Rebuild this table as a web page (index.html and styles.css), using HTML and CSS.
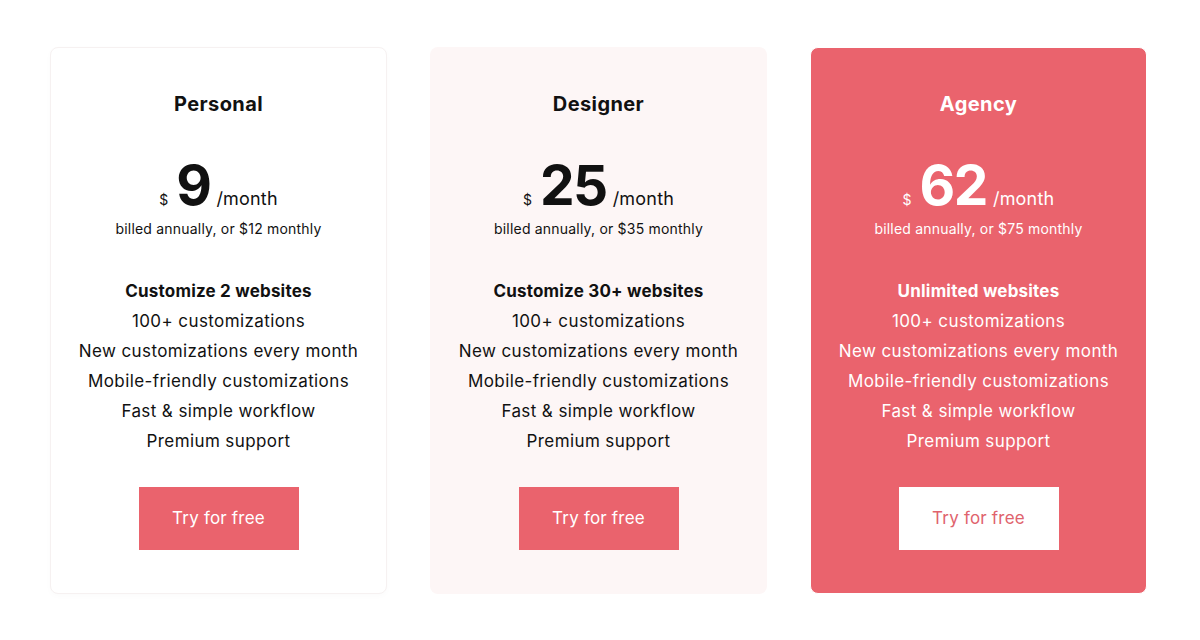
FILE: index.html
```html
<!DOCTYPE html>
<html>
    <head>
        <meta charset="utf-8">
        <link rel="stylesheet" href="styles.css">
    </head>
    <body>
        <div id="pricing">

            <div class="card plain">
                <h2 class="plan">Personal</h2>
                <div class="price">
                    <span class="cur">$</span>
                    <span class="amount">9</span>
                    <span class="per">/month</span>
                </div>
                <p class="billed">billed annually, or $12 monthly</p>
                <ul class="features">
                    <li class="main">Customize 2 websites</li>
                    <li>100+ customizations</li>
                    <li>New customizations every month</li>
                    <li>Mobile-friendly customizations</li>
                    <li>Fast &amp; simple workflow</li>
                    <li>Premium support</li>
                </ul>
                <a class="btn" href="#">Try for free</a>
            </div>

            <div class="card tinted">
                <h2 class="plan">Designer</h2>
                <div class="price">
                    <span class="cur">$</span>
                    <span class="amount">25</span>
                    <span class="per">/month</span>
                </div>
                <p class="billed">billed annually, or $35 monthly</p>
                <ul class="features">
                    <li class="main">Customize 30+ websites</li>
                    <li>100+ customizations</li>
                    <li>New customizations every month</li>
                    <li>Mobile-friendly customizations</li>
                    <li>Fast &amp; simple workflow</li>
                    <li>Premium support</li>
                </ul>
                <a class="btn" href="#">Try for free</a>
            </div>

            <div class="card featured">
                <h2 class="plan">Agency</h2>
                <div class="price">
                    <span class="cur">$</span>
                    <span class="amount">62</span>
                    <span class="per">/month</span>
                </div>
                <p class="billed">billed annually, or $75 monthly</p>
                <ul class="features">
                    <li class="main">Unlimited websites</li>
                    <li>100+ customizations</li>
                    <li>New customizations every month</li>
                    <li>Mobile-friendly customizations</li>
                    <li>Fast &amp; simple workflow</li>
                    <li>Premium support</li>
                </ul>
                <a class="btn" href="#">Try for free</a>
            </div>

        </div>
    </body>
</html>
```

FILE: styles.css
```css
*{ padding: 0px; margin: 0px; box-sizing: border-box; }

html, body
{
    background: white;
    width: 100%;
    height: 100%;
}

body
{
    font-family: "Inter", "Noto Sans", sans-serif;
    color: #111;
}

#pricing
{
    display: flex;
    gap: 43px;
    padding: 47px 50px 0 50px;
}

.card
{
    width: 337px;
    height: 547px;
    border-radius: 8px;
    border: 1px solid transparent;
    text-align: center;
    padding-top: 42px;
}

.card.plain
{
    background: white;
    border-color: #f6f1f1;
    box-shadow: 0 2px 6px rgba(0,0,0,0.02);
}
.card.tinted
{
    background: #fdf6f6;
}
.card.featured
{
    background: #ea636d;
    border-color: white;
    color: white;
}

.plan
{
    font-size: 20px;
    line-height: 28px;
    font-weight: 700;
    letter-spacing: 0.4px;
}

.price
{
    display: flex;
    justify-content: center;
    align-items: baseline;
    gap: 6px;
    margin-top: 40px;
    line-height: 1;
}
.price .cur  { font-size: 14px; margin-right: 2px; }
.price .amount
{
    font-size: 55px;
    font-weight: 700;
    letter-spacing: -1.5px;
}
.price .per
{
    font-size: 18px;
    letter-spacing: 0.2px;
}

.billed
{
    font-size: 14px;
    line-height: 20px;
    margin-top: 6px;
    letter-spacing: 0.2px;
}

.features
{
    list-style: none;
    margin-top: 37px;
    font-size: 17px;
    line-height: 30px;
    letter-spacing: 0.4px;
}
.features .main { font-weight: 700; letter-spacing: 0.2px; }

.btn
{
    display: block;
    width: 160px;
    height: 63px;
    line-height: 63px;
    margin: 31px auto 0;
    background: #ea636d;
    color: white;
    text-decoration: none;
    font-size: 17px;
    letter-spacing: 0.2px;
}
.featured .btn
{
    background: white;
    color: #e0636d;
}
```
